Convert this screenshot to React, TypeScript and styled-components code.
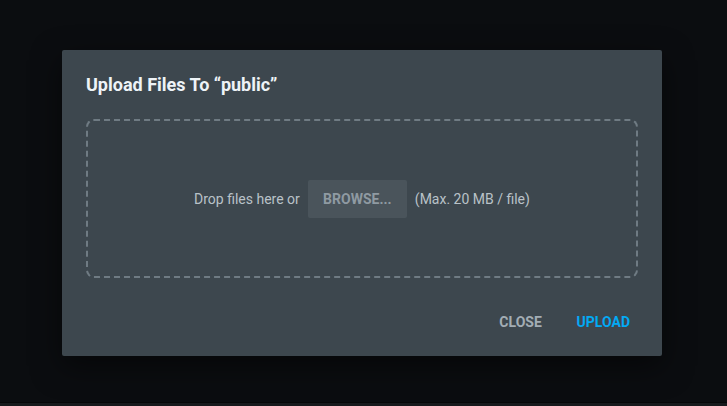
import React from "react";
import styled, { createGlobalStyle } from "styled-components";

const Global = createGlobalStyle`
  html, body { margin: 0; padding: 0; background: #0b0d10; }
  body { font-family: Roboto, "Liberation Sans", sans-serif; -webkit-font-smoothing: antialiased; }
  * { box-sizing: border-box; }
`;

const Page = styled.div`
  width: 727px;
  height: 406px;
  display: flex;
  flex-direction: column;
  background: #0b0d10;
`;

const Stage = styled.div`
  flex: 1;
  padding: 50px 0 0 62px;
`;

const BottomEdge = styled.div`
  height: 4px;
  background: #16191c;
  border-top: 1px solid #060709;
`;

const Dialog = styled.div`
  width: 600px;
  height: 306px;
  background: #3d474e;
  border-radius: 2px;
  box-shadow: 0 10px 30px rgba(0, 0, 0, 0.5);
  padding: 24px 24px 16px;
  display: flex;
  flex-direction: column;
`;

const Title = styled.h2`
  margin: 0;
  font-size: 18px;
  line-height: 22px;
  font-weight: 700;
  color: #eef3f7;
`;

const DropZone = styled.div`
  margin-top: 23px;
  height: 159px;
  border: 2px dashed #6f7b83;
  border-radius: 8px;
  display: flex;
  align-items: center;
  justify-content: center;
  gap: 8px;
  font-size: 14px;
  color: #b9c2c8;
`;

const BrowseButton = styled.button`
  height: 38px;
  width: 99px;
  border: none;
  border-radius: 2px;
  background: #4a545b;
  color: #8f9aa2;
  font-family: inherit;
  font-size: 14px;
  font-weight: 700;
  text-transform: uppercase;
  cursor: pointer;
`;

const Actions = styled.div`
  margin-top: auto;
  display: flex;
  justify-content: flex-end;
  gap: 16px;
`;

const ActionButton = styled.button<{ $primary?: boolean }>`
  height: 36px;
  min-width: 64px;
  padding: 0 8px;
  border: none;
  background: transparent;
  color: ${(p) => (p.$primary ? "#03a9f4" : "#a3adb4")};
  font-family: inherit;
  font-size: 14px;
  font-weight: 700;
  text-transform: uppercase;
  cursor: pointer;
`;

export default function App() {
  return (
    <Page>
      <Global />
      <Stage>
        <Dialog>
          <Title>Upload Files To “public”</Title>
          <DropZone>
            <span>Drop files here or</span>
            <BrowseButton>Browse...</BrowseButton>
            <span>(Max. 20 MB / file)</span>
          </DropZone>
          <Actions>
            <ActionButton>Close</ActionButton>
            <ActionButton $primary>Upload</ActionButton>
          </Actions>
        </Dialog>
      </Stage>
      <BottomEdge />
    </Page>
  );
}
